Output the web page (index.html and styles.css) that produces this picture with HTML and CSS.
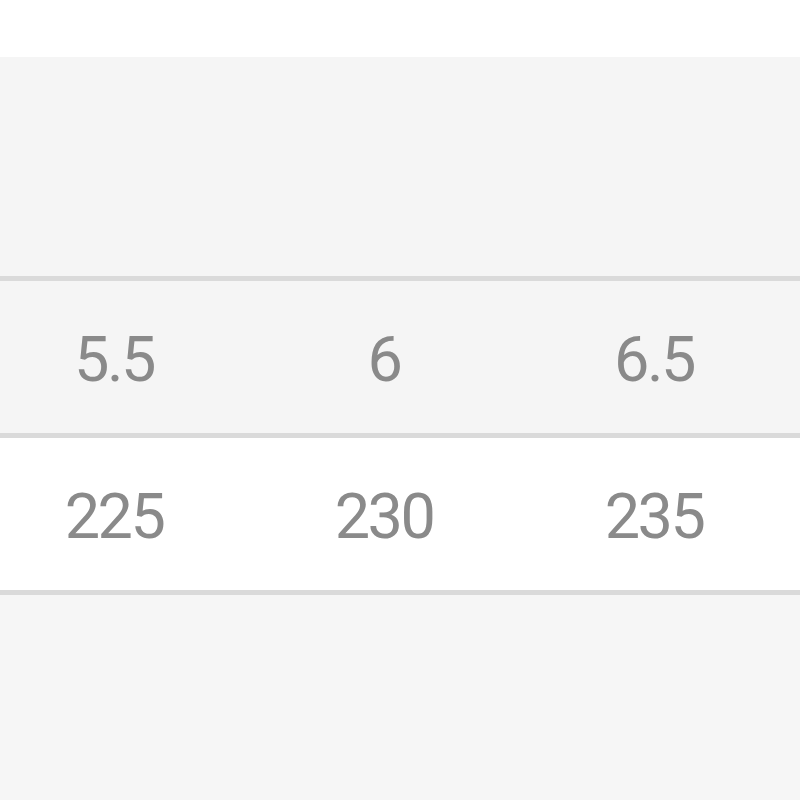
FILE: index.html
```html
<!DOCTYPE html>
<html>
<head>
<meta charset="utf-8">
<link rel="stylesheet" href="styles.css">
</head>
<body>
<div class="page">
  <div class="top"></div>
  <div class="head"></div>
  <div class="row grey">
    <div class="cell">5.5</div>
    <div class="cell">6</div>
    <div class="cell">6.5</div>
  </div>
  <div class="row white">
    <div class="cell">225</div>
    <div class="cell">230</div>
    <div class="cell">235</div>
  </div>
  <div class="rest"></div>
</div>
</body>
</html>
```
FILE: styles.css
```css
html, body {
  margin: 0;
  padding: 0;
  background: #f6f6f6;
}
.page {
  width: 800px;
  height: 800px;
  overflow: hidden;
  display: flex;
  flex-direction: column;
  font-family: Roboto, "Liberation Sans", sans-serif;
}
.top {
  height: 57px;
  background: #ffffff;
  flex: none;
}
.head {
  height: 219px;
  background: #f5f5f5;
  border-bottom: 5px solid #dadada;
  flex: none;
}
.row {
  display: flex;
  height: 152px;
  margin-left: -20px;
  border-bottom: 5px solid #dadada;
  flex: none;
  align-items: center;
}
.row.grey { background: #f5f5f5; }
.row.white { background: #ffffff; }
.cell {
  width: 270px;
  flex: none;
  text-align: center;
  font-size: 63px;
  color: #8a8a8a;
  line-height: 1;
  letter-spacing: -2.5px;
  padding-top: 4px;
  text-indent: -2px;
}
.rest {
  flex: 1;
  background: #f6f6f6;
}
```
